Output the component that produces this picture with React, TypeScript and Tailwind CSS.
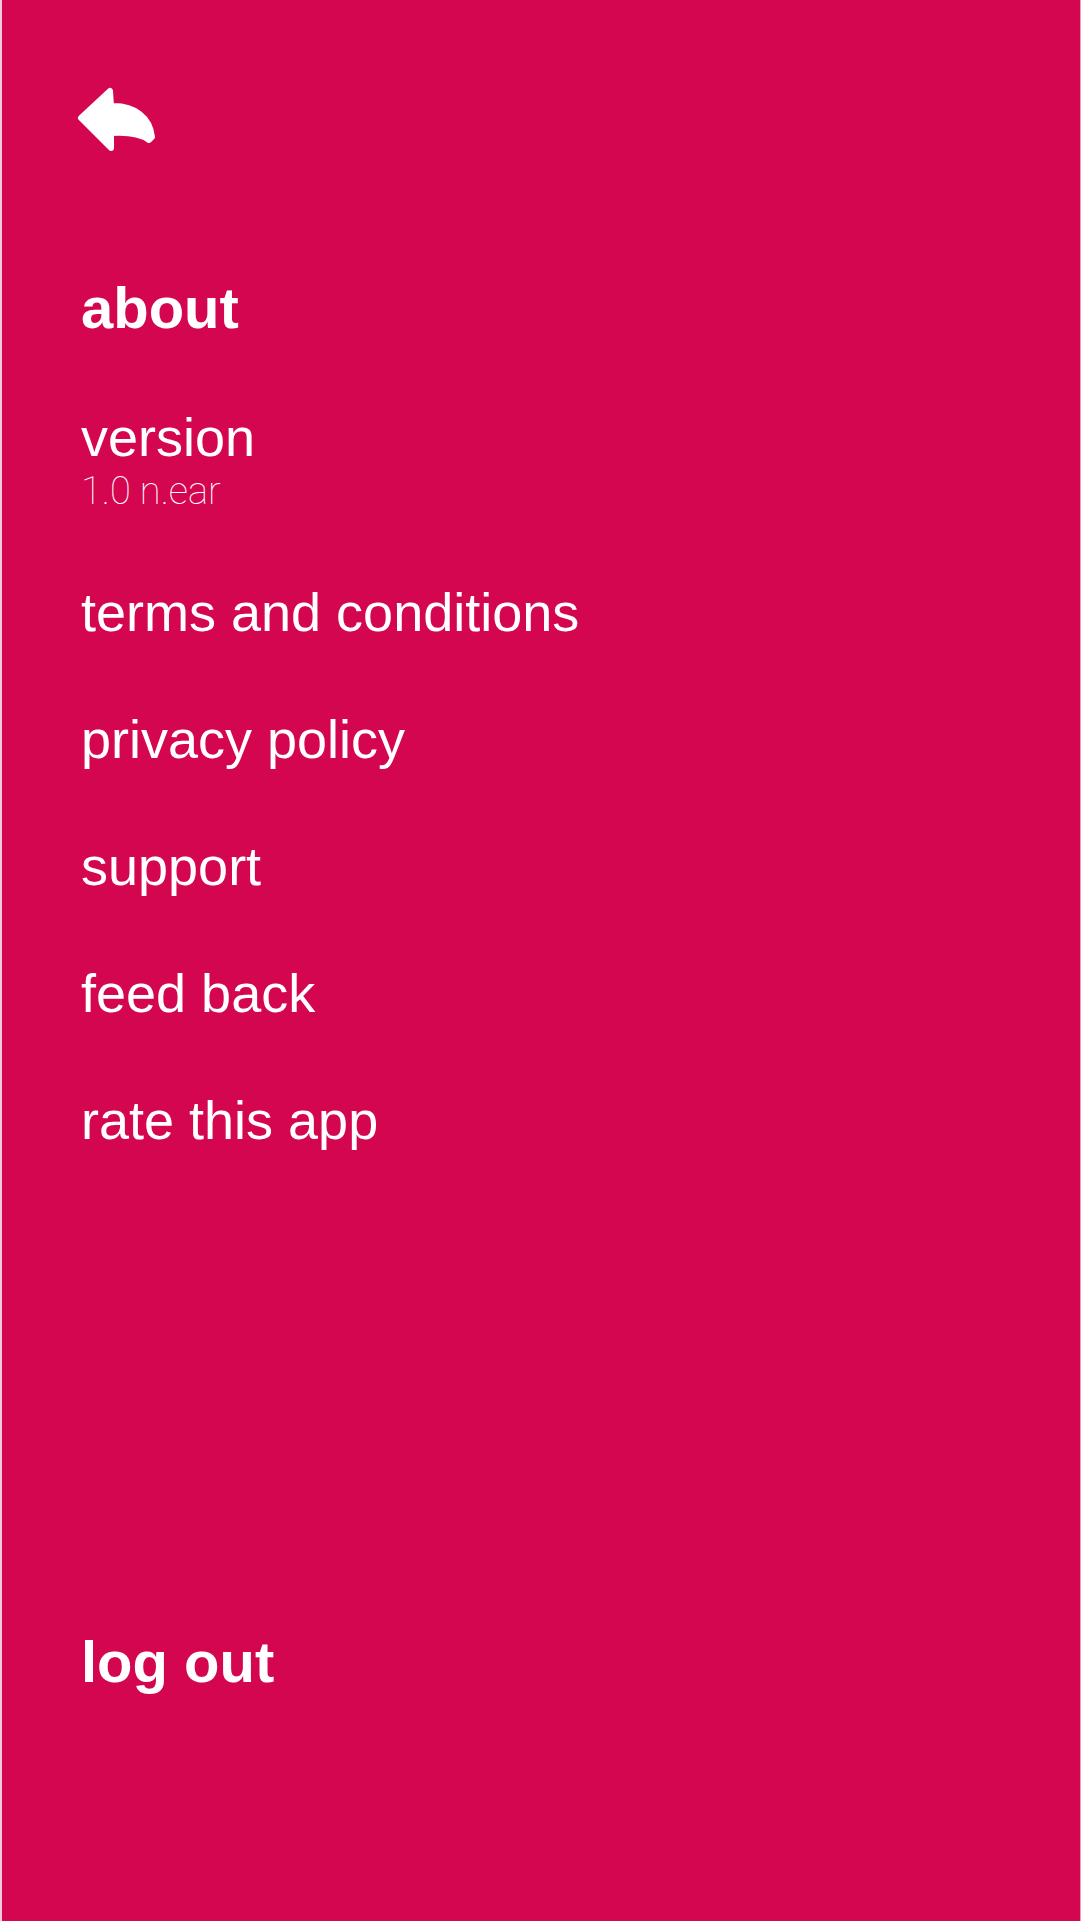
import React from 'react';

const items = ['terms and conditions', 'privacy policy', 'support', 'feed back', 'rate this app'];

function BackIcon() {
  return (
    <svg viewBox="72 82 88 76" className="w-[88px] h-[76px] block" fill="#ffffff" stroke="#ffffff" strokeWidth={6} strokeLinejoin="round" strokeLinecap="round">
      <path d="M81 118 L110 91 L111 106 C135 105 150 118 152 137 L149 140 C141 134 126 132 111 133 L111 148 Z" />
    </svg>
  );
}

export default function App() {
  return (
    <main className="min-h-screen bg-[#d4064f] text-white border-l-2 border-l-[#f5cbdb] border-r border-r-[#f29bbd] font-['Liberation_Sans',Arial,sans-serif]">
      <div className="pt-[82px] pl-[70px]">
        <button type="button" aria-label="back" className="block">
          <BackIcon />
        </button>
      </div>

      <div className="pl-[79px]">
        <h1 className="mt-[121px] text-[58px] leading-[58px] font-bold">about</h1>

        <div className="mt-[73px]">
          <p className="text-[54px] leading-[54px]">version</p>
          <p className="mt-[8px] text-[38px] leading-[38px] font-thin font-['Roboto',sans-serif]">1.0 n.ear</p>
        </div>

        <ul className="mt-[75px] flex flex-col gap-[73px]">
          {items.map((item) => (
            <li key={item} className="text-[54px] leading-[54px]">
              {item}
            </li>
          ))}
        </ul>

        <p className="mt-[486px] text-[58px] leading-[58px] font-bold">log out</p>
      </div>
    </main>
  );
}
